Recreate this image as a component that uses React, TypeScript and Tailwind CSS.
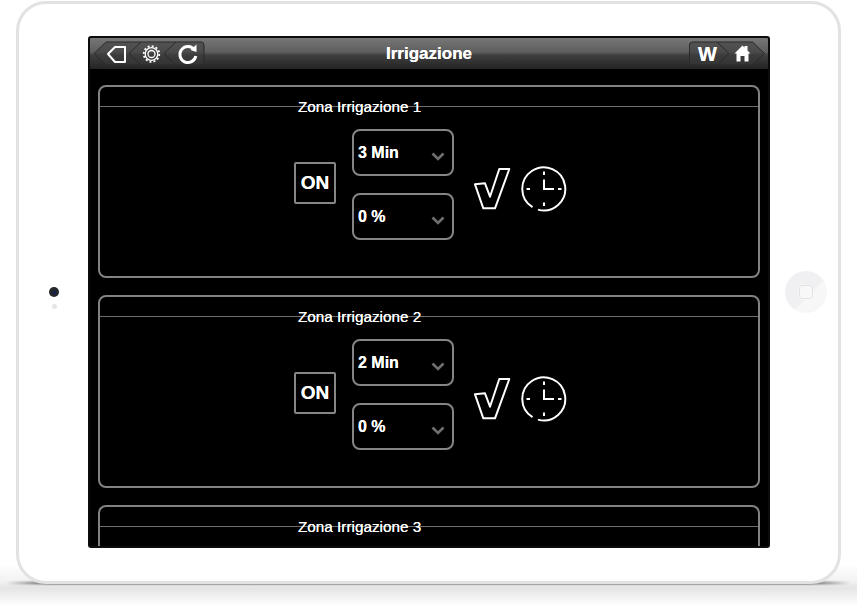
import React from "react";

const font = { fontFamily: '"Liberation Sans", Arial, sans-serif' };

function Chevron() {
  return (
    <svg width="14" height="9" viewBox="0 0 14 9" fill="none">
      <polyline points="1.5,1.5 7,7 12.5,1.5" stroke="#6f6f6f" strokeWidth="2.6" />
    </svg>
  );
}

function Select({ label }: { label: string }) {
  return (
    <div className="flex h-[47px] w-[102px] items-center justify-between rounded-[8px] border-2 border-[#858585] pl-[4px] pr-[7px] text-[16px] font-bold text-white [text-shadow:0_0_0.6px_#ffffff]">
      <span>{label}</span>
      <span className="mt-[7px] flex"><Chevron /></span>
    </div>
  );
}

function Check() {
  return (
    <svg width="38" height="42" viewBox="0 0 38 42" fill="none" className="mt-[39px] ml-[20px] shrink-0">
      <polygon points="1,16.300 11,15.300 16,28.700 25.300,1 35.300,1 21,40.300 9.300,40.300" stroke="#fff" strokeWidth="2" strokeLinejoin="round" />
    </svg>
  );
}

function Clock() {
  return (
    <svg width="46" height="46" viewBox="0 0 46 46" fill="none" className="mt-[37px] ml-[9px] shrink-0" stroke="#fff" strokeWidth="2">
      <path d="M11.500 41.200A21.500 21.500 0 1 1 17 43.600" />
      <path d="M23 5.500V9M23 36.500V40M5.500 23H9M37 23H40.500" />
      <path d="M23 13.500V23H33" />
    </svg>
  );
}

function Panel({ n, time }: { n: number; time?: string }) {
  return (
    <section className="h-[193px] shrink-0 rounded-[8px] border-2 border-[#828282]">
      <div className="h-[20px] border-b border-[#6f6f6f] pl-[198px] text-[15.3px] leading-[39px] text-white [text-shadow:0_0_0.4px_#ffffff]">
        Zona Irrigazione {n}
      </div>
      {time && (
        <div className="mt-[22px] flex items-start justify-center pl-[3px]">
          <div className="mt-[33px] flex h-[42px] w-[42px] items-center justify-center rounded-[2px] border-2 border-[#868686] text-[19px] font-bold text-white [text-shadow:0_0_0.6px_#ffffff]">
            ON
          </div>
          <div className="ml-[16px] flex flex-col gap-[17px]">
            <Select label={time} />
            <Select label="0 %" />
          </div>
          <Check />
          <Clock />
        </div>
      )}
    </section>
  );
}

function LeftButtons() {
  return (
    <svg width="116" height="26" viewBox="0 0 116 26" fill="none" className="shrink-0">
      <path d="M3 12.500L15 1H110a3 3 0 0 1 3 3V21a3 3 0 0 1-3 3H15Z" fill="#3a3a3a" fillOpacity="0.55" stroke="#2a2a2a" />
      <path d="M50 1L38 12.500L50 24M85 1L73 12.500L85 24" stroke="#2a2a2a" />
      <path d="M17 13L24 6H34V21H24Z" stroke="#fff" strokeWidth="2" strokeLinejoin="round" />
      <circle cx="60.500" cy="13" r="3.500" stroke="#fff" strokeWidth="1.300" />
      <circle cx="60.500" cy="13" r="6.300" stroke="#fff" strokeWidth="1.300" />
      <circle cx="60.500" cy="13" r="7.800" stroke="#fff" strokeWidth="1.800" strokeDasharray="2 2.080" />
      <path d="M103.500 9A8 8 0 1 0 104.800 15" stroke="#fff" strokeWidth="3" />
      <polygon points="99.500,9 105.500,3.500 105.500,11" fill="#fff" />
    </svg>
  );
}

function RightButtons() {
  return (
    <svg width="78" height="26" viewBox="0 0 78 26" fill="none" className="shrink-0">
      <path d="M3.500 1H63.500L75.500 12.500L63.500 24H3.500a3 3 0 0 1-3-3V4a3 3 0 0 1 3-3Z" fill="#3a3a3a" fillOpacity="0.55" stroke="#2a2a2a" />
      <path d="M28 1L40 12.500L28 24" stroke="#2a2a2a" />
      <path d="M45.500 12.500L53.500 4.500L55.500 6.500V5H58.500V9.500L61.500 12.500H59.500V20.500H55.500V15H51.500V20.500H47.500V12.500Z" fill="#fff" />
    </svg>
  );
}

function Header() {
  return (
    <header className="grid h-[31px] shrink-0 grid-cols-[1fr_auto_1fr] items-start bg-[linear-gradient(to_bottom,#777777_0%,#5e5e5e_45%,#3f3f3f_55%,#242424_100%)] px-[1px] pt-[3px]">
      <LeftButtons />
      <h1 className="pt-[3px] text-[17px] font-bold leading-[20px] text-white [text-shadow:0_0_0.6px_#ffffff]">Irrigazione</h1>
      <div className="relative justify-self-end">
        <RightButtons />
        <span className="absolute left-[9px] top-[2px] text-[20px] font-bold leading-[23px] text-white [text-shadow:0_0_0.6px_#ffffff]">W</span>
      </div>
    </header>
  );
}

export default function App() {
  return (
    <div
      style={font}
      className="relative h-[606px] w-[857px] overflow-hidden bg-[linear-gradient(to_bottom,#ffffff_0%,#ffffff_93%,#f2f2f2_96%,#e4e4e4_97%,#ffffff_100%)] pl-[16px] pt-[1px]"
    >
      <div className="absolute left-[6px] right-[6px] top-[582px] h-[2px] bg-[linear-gradient(to_right,transparent_0%,#222222_5%,#222222_95%,transparent_100%)] blur-[1px]" />
      <div className="relative flex h-[583px] w-[825px] items-center rounded-[30px] border-[3px] border-[#e2e2e2] bg-white pb-[1px]">
        <div className="flex w-[69px] shrink-0 flex-col items-center gap-[7px] pl-[1px] pt-[12px]">
          <div className="flex h-[10px] w-[10px] items-center justify-center rounded-full bg-[#23262b]">
            <div className="h-[3px] w-[3px] rounded-full bg-[#101c5c]" />
          </div>
          <div className="h-[5px] w-[5px] rounded-full bg-[#e6e6e6]" />
        </div>
        <main className="flex h-[512px] w-[682px] shrink-0 flex-col overflow-hidden rounded-[3px] border-2 border-[#0c0c0c] bg-black">
          <Header />
          <div className="flex flex-col gap-[17px] px-[8px] pt-[16px]">
            <Panel n={1} time="3 Min" />
            <Panel n={2} time="2 Min" />
            <Panel n={3} />
          </div>
        </main>
        <div className="flex flex-1 justify-center pl-[3px]">
          <div className="flex h-[42px] w-[42px] items-center justify-center rounded-full bg-[linear-gradient(135deg,#f0f0f2_0%,#f0f0f2_55%,#f8f8f9_60%,#f5f5f6_100%)]">
            <div className="h-[14px] w-[14px] rounded-[3px] border border-[#e2e2e2] bg-[#f8f8f8] shadow-[0_0_2px_#ffffff]" />
          </div>
        </div>
      </div>
    </div>
  );
}
